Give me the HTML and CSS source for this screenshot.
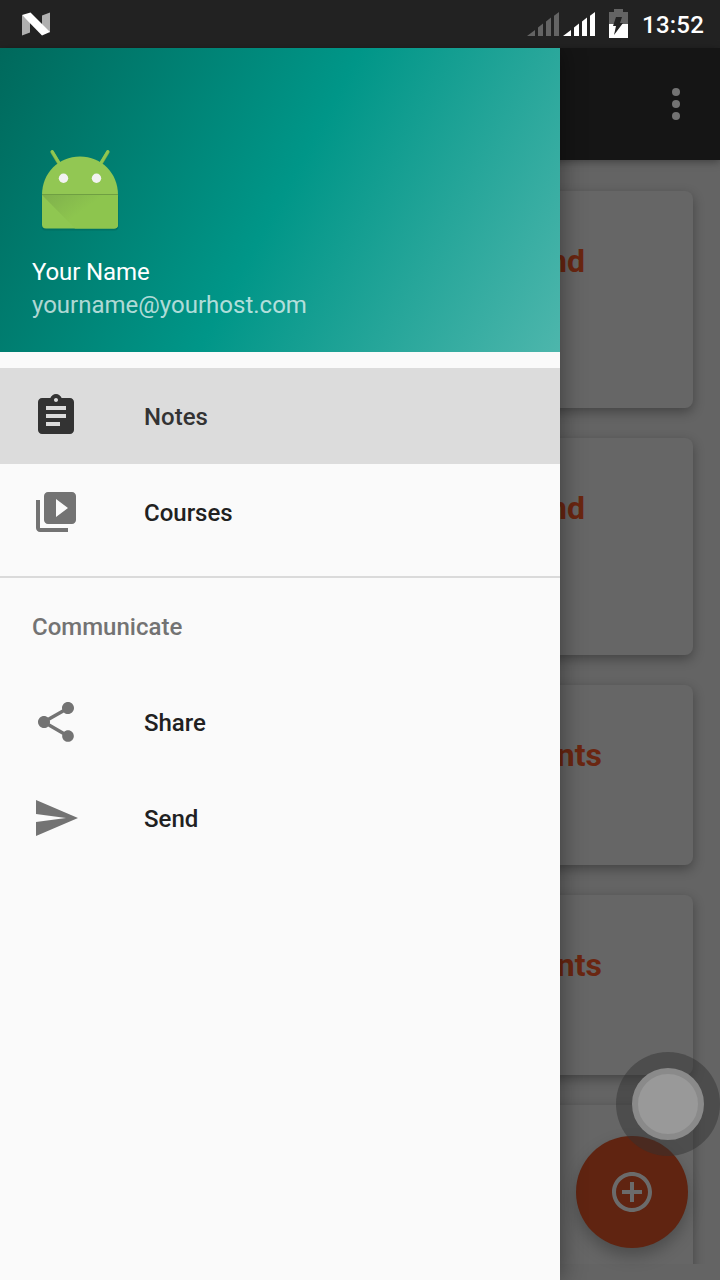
FILE: index.html
```
<!DOCTYPE html>
<html lang="en">
<head>
<meta charset="utf-8">
<title>Notes</title>
<link rel="stylesheet" href="styles.css">
</head>
<body>
<div class="screen">
  <header class="status-bar">
    <svg class="status-logo" width="30" height="26" viewBox="0 0 30 26">
      <path fill="#b0b0b0" d="M1 3v20.500l8-3V10zM29 0.500v20l-8-7V3.500z"/>
      <path fill="#fff" d="M1 3l8.500-2.500L29 20l-8 3.500z"/>
    </svg>
    <div class="status-icons">
      <svg width="68" height="24" viewBox="0 0 68 24">
        <path fill="#646464" d="M0 24L8 18v6zM11 15.500l5-4V24h-5zM19 9.500l5-4V24h-5zM27 3.700L32 0v24h-5z"/>
        <path fill="#fff" d="M36 24l8-6v6zM47 15.500l5-4V24h-5zM55 9.500l5-4V24h-5zM63 3.700L68 0v24h-5z"/>
      </svg>
      <svg class="battery" width="19" height="29" viewBox="0 0 19 29">
        <path fill="#646464" d="M0 3h5V0h9v3h5v12H0z"/>
        <path fill="#fff" d="M0 15h19v14H0z"/>
        <path fill="#222" d="M7 8h6l-2 6h3L5 26l2-9H4z"/>
      </svg>
      <span class="clock">13:52</span>
    </div>
  </header>

  <div class="app">
    <div class="toolbar">
      <svg width="48" height="48" viewBox="0 0 24 24" fill="#737373"><circle cx="12" cy="6" r="2"/><circle cx="12" cy="12" r="2"/><circle cx="12" cy="18" r="2"/></svg>
    </div>
    <main class="notes">
      <article class="card tall"><h2 class="title">and</h2></article>
      <article class="card tall"><h2 class="title">and</h2></article>
      <article class="card"><h2 class="title wide">Intents</h2></article>
      <article class="card"><h2 class="title wide">Intents</h2></article>
      <article class="card tall"></article>
    </main>
    <button class="fab" aria-label="Add note">
      <svg width="48" height="48" viewBox="0 0 24 24" fill="#6b6b6b"><path d="M13 7h-2v4H7v2h4v4h2v-4h4v-2h-4V7zm-1-5C6.480 2 2 6.480 2 12s4.480 10 10 10 10-4.480 10-10S17.520 2 12 2zm0 18c-4.410 0-8-3.590-8-8s3.590-8 8-8 8 3.590 8 8-3.590 8-8 8z"/></svg>
    </button>

    <aside class="drawer">
      <div class="profile">
        <svg class="avatar" width="80" height="84" viewBox="0 0 80 84">
          <defs>
            <linearGradient id="fold" x1="0" y1="0" x2="1" y2="0.600"><stop offset="0" stop-color="#7fb04c"/><stop offset=".6" stop-color="#8dc54e"/></linearGradient>
          </defs>
          <path d="M1.500 46h77v30a4 4 0 0 1-4 4h-69a4 4 0 0 1-4-4z" fill="#00695c" opacity=".6" transform="translate(0 1.500)"/>
          <path d="M12 3l9 15M68 3l-9 15" stroke="#7cab44" stroke-width="3.400" stroke-linecap="round"/>
          <path d="M12.300 2.500l9 15M67.700 2.500l-9 15" stroke="#8fc751" stroke-width="2.900" stroke-linecap="round"/>
          <path d="M2 46C2 24 18.500 7.500 40 7.500S78 24 78 46z" fill="#92c753"/>
          <path d="M2 46h76v29.500a4 4 0 0 1-4 4H6a4 4 0 0 1-4-4z" fill="#8fc751"/>
          <path d="M2 46h76v29.500a4 4 0 0 1-4 4H35z" fill="url(#fold)"/>
          <path d="M2 45.500h76" stroke="#6f9f42" stroke-width="1"/>
          <circle cx="23.500" cy="29.200" r="4.700" fill="#f2f2f2"/><circle cx="56.500" cy="29.200" r="4.700" fill="#f2f2f2"/>
        </svg>
        <div class="name">Your Name</div>
        <div class="email">yourname@yourhost.com</div>
      </div>
      <nav class="menu">
        <a class="item selected">
          <svg width="48" height="48" viewBox="0 0 24 24"><path d="M19 3h-4.180C14.400 1.840 13.300 1 12 1c-1.300 0-2.400.84-2.820 2H5c-1.100 0-2 .9-2 2v14c0 1.100.9 2 2 2h14c1.100 0 2-.9 2-2V5c0-1.100-.9-2-2-2zm-7 0c.55 0 1 .45 1 1s-.45 1-1 1-1-.45-1-1 .45-1 1-1zm2 14H7v-2h7v2zm3-4H7v-2h10v2zm0-4H7V7h10v2z"/></svg>
          <span>Notes</span>
        </a>
        <a class="item">
          <svg width="48" height="48" viewBox="0 0 24 24"><path d="M4 6H2v14c0 1.100.9 2 2 2h14v-2H4V6zm16-4H8c-1.100 0-2 .9-2 2v12c0 1.100.9 2 2 2h12c1.100 0 2-.9 2-2V4c0-1.100-.9-2-2-2zm-8 12.500v-9l6 4.500-6 4.500z"/></svg>
          <span>Courses</span>
        </a>
        <div class="subheader">Communicate</div>
        <a class="item">
          <svg width="48" height="48" viewBox="0 0 24 24"><path d="M18 16.080c-.76 0-1.440.3-1.960.77L8.910 12.700c.05-.23.09-.46.09-.7s-.04-.47-.09-.7l7.050-4.110c.54.5 1.250.81 2.040.81 1.660 0 3-1.340 3-3s-1.340-3-3-3-3 1.340-3 3c0 .24.04.47.09.7L8.040 9.810C7.500 9.310 6.790 9 6 9c-1.660 0-3 1.340-3 3s1.340 3 3 3c.79 0 1.500-.31 2.040-.81l7.120 4.160c-.05.21-.08.43-.08.65 0 1.610 1.310 2.920 2.920 2.920 1.610 0 2.920-1.310 2.920-2.920s-1.310-2.920-2.920-2.920z"/></svg>
          <span>Share</span>
        </a>
        <a class="item">
          <svg width="48" height="48" viewBox="0 0 24 24"><path d="M2.010 21L23 12 2.010 3 2 10l15 2-15 2z"/></svg>
          <span>Send</span>
        </a>
      </nav>
    </aside>
    <div class="assist"><div class="assist-knob"></div></div>
  </div>
</div>
</body>
</html>
```
FILE: styles.css
```
* { box-sizing: border-box; }
body { margin: 0; font-family: Roboto, sans-serif; }
.screen { width: 720px; height: 1280px; display: flex; flex-direction: column; overflow: hidden; }
svg { display: block; }

.status-bar {
  height: 48px; flex: none; background: #222;
  display: flex; justify-content: space-between;
  padding: 0 16px 0 21px;
}
.status-logo { margin-top: 12px; }
.status-icons { display: flex; }
.status-icons > svg { margin-top: 12px; }
.status-icons > .battery { margin: 9px 14px 0 14px; }
.clock { color: #fff; font-size: 24px; font-weight: 500; line-height: 50px; letter-spacing: .2px; }

.app { position: relative; flex: 1; background: #646464; display: flex; flex-direction: column; min-height: 0; }
.toolbar {
  height: 112px; flex: none; background: #151515; position: relative; z-index: 1;
  display: flex; justify-content: flex-end; align-items: center; padding-right: 20px;
  box-shadow: 0 2px 8px rgba(0, 0, 0, .35);
}
.notes {
  height: 1104px; overflow: hidden;
  display: flex; flex-direction: column; gap: 30px;
  padding: 31px 27px 0;
}
.card {
  height: 180px; flex: none; background: #666; border-radius: 8px;
  padding-top: 51px; box-shadow: 0 4px 12px rgba(0, 0, 0, .32);
}
.card.tall { height: 217px; }
.title {
  margin: 0; width: 558px; text-align: right; white-space: nowrap;
  font-size: 32px; font-weight: 700; line-height: 38px; color: #6a2611;
}
.title.wide { width: 575px; }

.fab {
  position: absolute; right: 32px; bottom: 32px; width: 112px; height: 112px;
  border: 0; border-radius: 50%; background: #602411;
  display: flex; align-items: center; justify-content: center;
  box-shadow: 0 8px 16px rgba(0, 0, 0, .25);
}

.drawer {
  position: absolute; left: 0; top: 0; bottom: 0; width: 560px; z-index: 2;
  background: #fafafa; box-shadow: 0 0 24px rgba(0, 0, 0, .45); clip-path: inset(0 -40px 0 0);
}
.profile {
  height: 304px; padding: 101px 32px 0;
  background: linear-gradient(118.500deg, #00695c, #009688 50%, #4db6ac);
  font-size: 24px;
}
.avatar { margin-left: 8px; }
.name { color: #fff; line-height: 28px; margin-top: 25px; letter-spacing: -.12px; }
.email { color: rgba(255, 255, 255, .7); line-height: 28px; margin-top: 5px; }

.menu { padding-top: 16px; font-size: 24px; font-weight: 500; }
.item { display: flex; align-items: center; gap: 64px; height: 96px; padding: 0 32px; color: #212121; }
.item svg { fill: #737373; }
.item span { padding-top: 2px; }
.item.selected { background: #dcdcdc; color: #333; }
.item.selected svg { fill: #333; }
.subheader {
  margin-top: 16px; height: 98px; border-top: 2px solid #dadada;
  padding: 0 32px; line-height: 98px; color: #737373;
}

.assist {
  position: absolute; left: 616px; top: 1004px; width: 104px; height: 104px; z-index: 3;
  border-radius: 50%; background: rgba(48, 48, 48, .47);
  display: flex; align-items: center; justify-content: center;
}
.assist-knob { width: 72px; height: 72px; border-radius: 50%; background: #999; border: 6px solid #8a8a8a; }
```
